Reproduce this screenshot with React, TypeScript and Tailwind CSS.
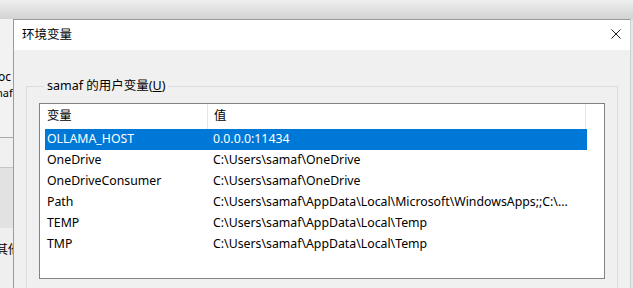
import React from "react";

const rows = [
  { name: "OLLAMA_HOST", value: "0.0.0.0:11434", selected: true },
  { name: "OneDrive", value: "C:\\Users\\samaf\\OneDrive" },
  { name: "OneDriveConsumer", value: "C:\\Users\\samaf\\OneDrive" },
  {
    name: "Path",
    value: "C:\\Users\\samaf\\AppData\\Local\\Microsoft\\WindowsApps;;C:\\...",
  },
  { name: "TEMP", value: "C:\\Users\\samaf\\AppData\\Local\\Temp" },
  { name: "TMP", value: "C:\\Users\\samaf\\AppData\\Local\\Temp" },
];

const font = "font-['Noto_Sans','Noto_Sans_CJK_SC',sans-serif]";

export default function App() {
  return (
    <div
      className={`w-[633px] h-[288px] overflow-hidden bg-[#ececec] flex flex-col text-[12px] text-black ${font}`}
    >
      {/* shadowed strip above the dialog */}
      <div className="h-[19px] shrink-0 bg-gradient-to-b from-[#efefef] to-[#d3d3d3]" />

      <div className="flex flex-1 min-h-0">
        {/* window behind, left edge */}
        <div className="w-[13px] shrink-0 flex flex-col overflow-hidden bg-[#ededed]">
          <div className="h-[118px] bg-[#f2f2f2] pt-[50px] leading-[16px] whitespace-nowrap">
            <div className="ml-[-2px]">oc</div>
            <div className="ml-[-4px] text-[11px]">naf</div>
          </div>
          <div className="h-[30px] border-t border-[#a9a9a9] bg-[#f0f0f0]" />
          <div className="h-[61px] border-t border-[#c6c6c6] bg-[#e2e2e2]" />
          <div className="flex-1 bg-[#efefef] pt-[14px] leading-[16px] whitespace-nowrap">
            <div className="ml-[-4px]">其他</div>
          </div>
        </div>

        {/* dialog */}
        <div className="flex-1 flex flex-col border-l border-t border-r border-[#9b9b9b] border-r-[#cfcfcf] bg-[#f0f0f0]">
          <div className="h-[30px] shrink-0 bg-white flex items-center justify-between pl-[8px] pr-[9px]">
            <span className="leading-[16px] text-[12.5px]">环境变量</span>
            <svg width="10" height="10" viewBox="0 0 10 10" className="mt-[-2px]">
              <path d="M0.5 0.5 L9.5 9.5 M9.5 0.5 L0.5 9.5" stroke="#1a1a1a" strokeWidth="1" />
            </svg>
          </div>

          <div className="flex-1 pt-[28px] px-[12px]">
            <fieldset className="border border-[#dcdcdc] h-[220px] px-[12px]">
              <legend className="ml-[5px] px-[3px] leading-[16px] text-[12.5px]">
                samaf 的用户变量(<span className="underline">U</span>)
              </legend>

              <div className="mt-[9px] h-[176px] border border-[#828282] bg-white text-[12.3px]">
                <div className="h-[25px] flex">
                  <div className="w-[168px] pl-[7px] flex items-center border-r border-[#e5e5e5]">
                    变量
                  </div>
                  <div className="w-[378px] pl-[6px] flex items-center border-r border-[#e5e5e5]">
                    值
                  </div>
                </div>
                {rows.map((row) => (
                  <div
                    key={row.name}
                    className={`ml-[5px] w-[542px] h-[21px] flex items-center whitespace-nowrap ${
                      row.selected ? "bg-[#0078d7] text-white" : ""
                    }`}
                  >
                    <div className="w-[168px] pl-[2px]">{row.name}</div>
                    <div className="flex-1 overflow-hidden">{row.value}</div>
                  </div>
                ))}
              </div>
            </fieldset>
          </div>
        </div>
        <div className="w-[2px] shrink-0 bg-[#e6e6e6]" />
      </div>
    </div>
  );
}
